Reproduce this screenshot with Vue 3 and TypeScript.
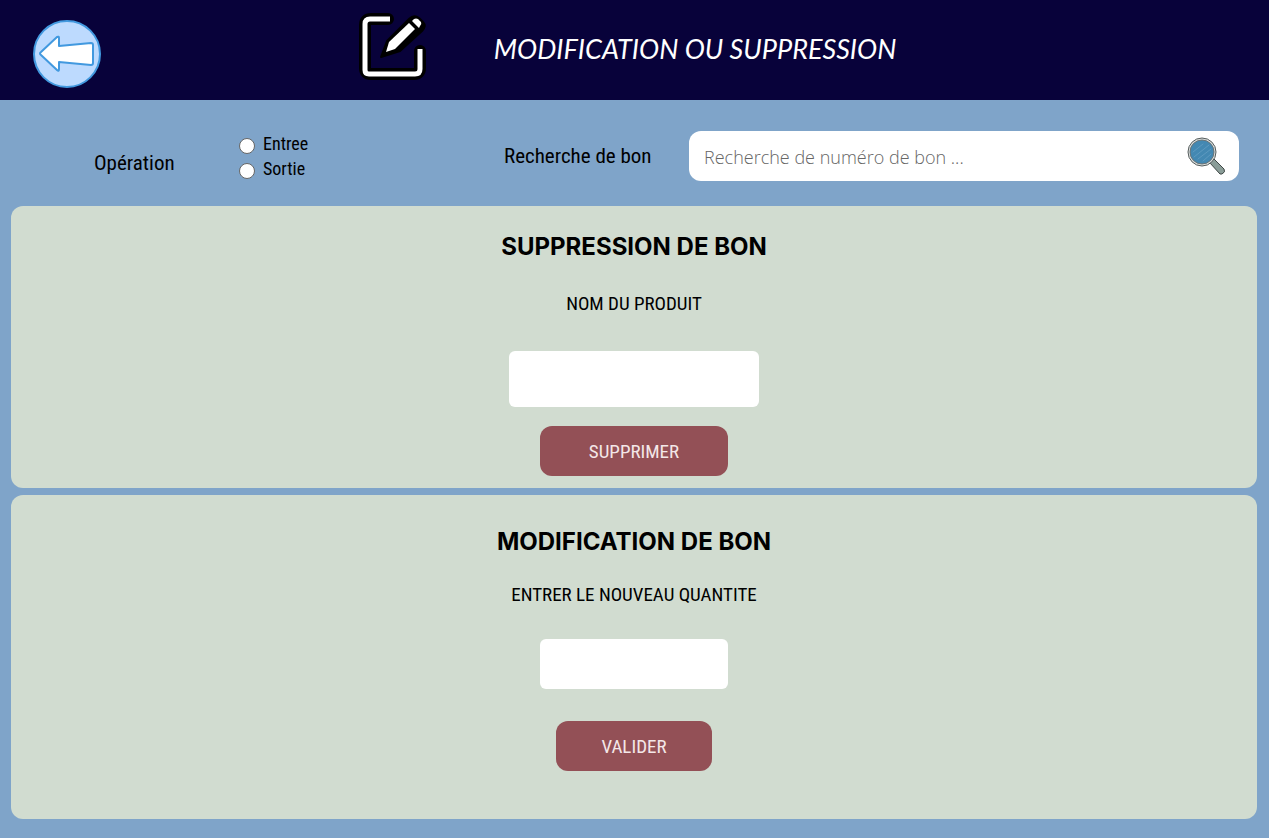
<script setup lang="ts">
import { ref } from 'vue'

const operations: string[] = ['Entree', 'Sortie']
const operation = ref<string>('')
const search = ref<string>('')
const product = ref<string>('')
const quantity = ref<string>('')
</script>

<template>
  <div class="page">
    <header class="header">
      <button class="back" type="button" aria-label="Retour">
        <svg viewBox="0 0 68 68" width="68" height="68">
          <circle cx="34" cy="34" r="33" fill="#bddafe" stroke="#4299df" stroke-width="2" />
          <path
            d="M8 32 L24 17 Q26 16 26 18 L26 26 L58 23 Q60 23 60 25 L60 43 Q60 45 58 45 L26 42 L26 49 Q26 52 24 50 L8 35 Q6 33.500 8 32Z"
            fill="#fff" stroke="#4299df" stroke-width="2" stroke-linejoin="round"
          />
        </svg>
      </button>
      <svg class="edit" viewBox="0 0 68 68" width="68" height="68" aria-hidden="true">
        <g fill="none">
          <path d="M29 6 H12 Q6 6 6 12 V55 Q6 61 12 61 H55 Q61 61 61 55 V38" stroke="#000" stroke-width="12" stroke-linecap="round" stroke-linejoin="round" />
          <path d="M31 6 H11 Q6 6 6 11 V57 Q6 61 10 61 H56 Q61 61 61 56 V36" stroke="#fff" stroke-width="5" />
        </g>
        <path d="M22 44 L28 28 L50 6 Q55 1 60 5 L64 9 Q68 13 63 18 L41 38 Z" fill="#000" stroke="#000" stroke-width="2" stroke-linejoin="round" />
        <path d="M27 39 L30 29 L50 10 L56 16 L36 36 Z" fill="#fff" />
        <path d="M53 8 L55 6 Q57 5 59 6 L62 9 Q63 11 61 13 L60 15 Z" fill="#fff" />
      </svg>
      <h1 class="title">MODIFICATION OU SUPPRESSION</h1>
    </header>

    <section class="toolbar">
      <div class="operation" role="radiogroup" aria-labelledby="operation-caption">
        <span id="operation-caption" class="caption">Opération</span>
        <div class="choices">
          <label v-for="name in operations" :key="name" class="choice">
            <input v-model="operation" type="radio" name="operation" :value="name" />
            <span>{{ name }}</span>
          </label>
        </div>
      </div>
      <div class="search">
        <label class="search-label" for="search">Recherche de bon</label>
        <div class="search-box">
          <input id="search" v-model="search" type="text" placeholder="Recherche de numéro de bon ..." />
          <button class="search-button" type="button" aria-label="Rechercher">
            <svg viewBox="0 0 40 40" width="40" height="40">
              <path d="M24 27 L28 23 L38 33 Q40 36 36 38 L34 38 Z" fill="#8b9d98" stroke="#3f4745" stroke-width="1" stroke-linejoin="round" />
              <circle cx="16" cy="16" r="14" fill="#d8dcdb" stroke="#555c5c" stroke-width="1" />
              <circle cx="16" cy="16" r="12" fill="#4388b2" stroke="#6b7476" stroke-width="1" />
              <path d="M7 16 L17 8 M8 21 L23 9 M12 23 L25 13 M17 25 L25 18" stroke="#5d9ac0" stroke-width="1" stroke-linecap="round" />
            </svg>
          </button>
        </div>
      </div>
    </section>

    <main class="panels">
      <form class="panel remove" @submit.prevent>
        <h2>SUPPRESSION DE BON</h2>
        <label for="product">NOM DU PRODUIT</label>
        <input id="product" v-model="product" type="text" />
        <button type="submit">SUPPRIMER</button>
      </form>
      <form class="panel modify" @submit.prevent>
        <h2>MODIFICATION DE BON</h2>
        <label for="quantity">ENTRER LE NOUVEAU QUANTITE</label>
        <input id="quantity" v-model="quantity" type="text" />
        <button type="submit">VALIDER</button>
      </form>
    </main>
  </div>
</template>

<style>
body {
  margin: 0;
  background: #7fa4c9;
}
</style>

<style scoped>
* {
  box-sizing: border-box;
}

.page {
  min-height: 100vh;
  background: #7fa4c9;
  color: #000;
  font-family: "Roboto Condensed", "Liberation Sans Narrow", "Liberation Sans", sans-serif;
}

button {
  border: 0;
  padding: 0;
  cursor: pointer;
  font-family: inherit;
}

input {
  border: 0;
  outline: 0;
}

svg {
  display: block;
}

.header {
  display: flex;
  align-items: center;
  gap: 4px;
  height: 100px;
  padding: 0 33px;
  background: #08023a;
}

.back {
  flex: none;
  margin-top: 8px;
  border-radius: 50%;
  background: none;
}

.edit {
  flex: none;
  margin: 0 63px 6px 20vw;
  overflow: visible;
}

.title {
  margin: 0 0 2px;
  color: #fff;
  font-family: Lato, sans-serif;
  font-size: 27px;
  font-style: italic;
  font-weight: 400;
  line-height: 32px;
  white-space: nowrap;
}

.toolbar {
  display: grid;
  grid-template-columns: 410px 1fr;
  height: 106px;
  padding: 31px 30px 0 94px;
}

.operation {
  display: grid;
  grid-template-columns: 145px 1fr;
}

.caption,
.search-label {
  font-size: 21px;
  line-height: 28px;
  white-space: nowrap;
}

.caption {
  margin-top: 18px;
}

.choice {
  display: flex;
  align-items: center;
  gap: 8px;
  height: 25px;
  font-size: 18px;
  line-height: 25px;
}

.choice input {
  appearance: none;
  width: 16px;
  height: 16px;
  margin: 4px 0 0;
  border: 1px solid #666;
  border-radius: 50%;
  background: #fff;
}

.choice input:checked {
  box-shadow: inset 0 0 0 3px #fff;
  background: #0075ff;
}

.search {
  display: grid;
  grid-template-columns: 185px 1fr;
  align-items: center;
  height: 50px;
}

.search-box {
  display: flex;
  align-items: center;
  height: 50px;
  padding: 0 13px 0 15px;
  border-radius: 12px;
  background: #fff;
}

.search-box input {
  flex: 1;
  min-width: 0;
  height: 50px;
  padding: 2px 0 0;
  background: none;
  font-family: "Open Sans", "Noto Sans", sans-serif;
  font-size: 18px;
  font-weight: 300;
}

.search-box input::placeholder {
  color: #666;
}

.search-button {
  background: none;
}

.panels {
  display: grid;
  gap: 7px;
  padding: 0 12px 19px 11px;
}

.panel {
  display: flex;
  flex-direction: column;
  align-items: center;
  border-radius: 12px;
  background: #d1dcd0;
}

.panel h2 {
  margin: 0;
  font-family: Inter, sans-serif;
  font-size: 24px;
  font-weight: 700;
  line-height: 32px;
}

.panel label {
  font-size: 19px;
  line-height: 28px;
}

.panel input {
  border-radius: 6px;
  padding: 0 12px;
  background: #fff;
  font-size: 19px;
  text-align: center;
}

.panel button {
  height: 50px;
  border-radius: 12px;
  background: #935056;
  color: #f3e7e8;
  font-size: 19px;
}

.remove {
  padding: 25px 0 12px;
}

.remove label {
  margin: 27px 0 33px;
}

.remove input {
  width: 250px;
  height: 56px;
}

.remove button {
  width: 188px;
  margin-top: 19px;
}

.modify {
  padding: 31px 0 48px;
}

.modify label {
  margin: 23px 0 30px;
}

.modify input {
  width: 188px;
  height: 50px;
}

.modify button {
  width: 156px;
  margin-top: 32px;
}
</style>
